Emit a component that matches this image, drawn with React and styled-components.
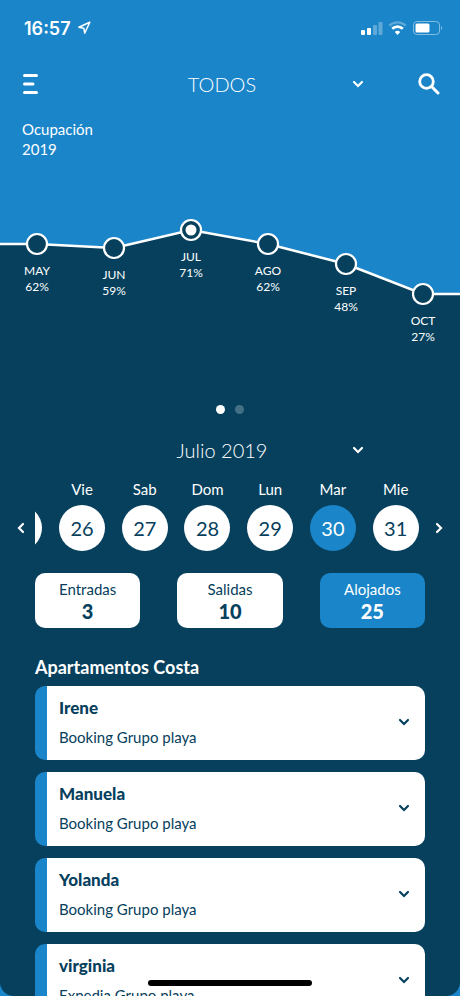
import React, { useState } from 'react'
import styled, { createGlobalStyle } from 'styled-components'

const BLUE = '#1a85c9'
const NAVY = '#06405d'
const WHITE = '#ffffff'

const occupancy = [
  { month: 'MAY', value: 62, x: 37, y: 76 },
  { month: 'JUN', value: 59, x: 114, y: 80 },
  { month: 'JUL', value: 71, x: 191, y: 62 },
  { month: 'AGO', value: 62, x: 268, y: 76 },
  { month: 'SEP', value: 48, x: 346, y: 96 },
  { month: 'OCT', value: 27, x: 423, y: 126 }
]

const days = [
  { name: 'Vie', number: 26 },
  { name: 'Sab', number: 27 },
  { name: 'Dom', number: 28 },
  { name: 'Lun', number: 29 },
  { name: 'Mar', number: 30 },
  { name: 'Mie', number: 31 }
]

const stats = [
  { label: 'Entradas', total: 3 },
  { label: 'Salidas', total: 10 },
  { label: 'Alojados', total: 25 }
]

const guests = [
  { name: 'Irene', source: 'Booking Grupo playa' },
  { name: 'Manuela', source: 'Booking Grupo playa' },
  { name: 'Yolanda', source: 'Booking Grupo playa' },
  { name: 'virginia', source: 'Expedia Grupo playa' }
]

const Chevron = props => (
  <svg width="12" height="12" viewBox="0 0 12 12" fill="none" aria-hidden="true" {...props}>
    <path
      d="M2 4l4 4 4-4"
      stroke="currentColor"
      strokeWidth="2.2"
      strokeLinecap="round"
      strokeLinejoin="miter"
    />
  </svg>
)

const Status = () => (
  <StatusBar>
    <Clock>
      16:57
      <svg width="14" height="14" viewBox="0 0 14 14" fill="none" aria-hidden="true">
        <path
          d="M12.8 1.2L1.8 6.3l5 .9.9 5z"
          stroke="currentColor"
          strokeWidth="1.5"
          strokeLinejoin="round"
        />
      </svg>
    </Clock>
    <svg width="84" height="16" viewBox="0 0 84 16" fill="none" aria-hidden="true">
      <g fill={WHITE}>
        <rect x="1" y="10" width="4" height="5" rx="1" />
        <rect x="7" y="8" width="4" height="7" rx="1" />
        <rect x="13" y="5" width="4" height="10" rx="1" opacity="0.3" />
        <rect x="18.5" y="2" width="4" height="13" rx="1" opacity="0.3" />
      </g>
      <path d="M29.3 5.6a12 12 0 0 1 16.4 0" stroke={WHITE} strokeWidth="2.4" opacity="0.3" />
      <path d="M32.2 8.8a7.6 7.6 0 0 1 10.6 0" stroke={WHITE} strokeWidth="2.6" />
      <path d="M34.8 12a4.2 4.2 0 0 1 5.4 0L37.5 15z" fill={WHITE} />
      <rect x="53.5" y="1.5" width="26" height="13" rx="3.5" stroke={WHITE} opacity="0.45" />
      <rect x="55.5" y="3.5" width="14" height="9" rx="1.5" fill={WHITE} />
      <path d="M81 6v4c1.6-.5 1.6-3.5 0-4z" fill={WHITE} opacity="0.45" />
    </svg>
  </StatusBar>
)

const Chart = () => {
  const first = occupancy[0]
  const last = occupancy[occupancy.length - 1]
  const line = [`0,${first.y}`, ...occupancy.map(p => `${p.x},${p.y}`), `460,${last.y}`].join(' ')

  return (
    <ChartSvg viewBox="0 0 460 192" role="img" aria-label="Ocupación 2019">
      <polygon points={`0,192 ${line} 460,192`} fill={NAVY} />
      <polyline points={line} fill="none" stroke={WHITE} strokeWidth="2.5" />
      {occupancy.map(p => (
        <g key={p.month}>
          <circle cx={p.x} cy={p.y} r="10" fill={NAVY} stroke={WHITE} strokeWidth="2.2" />
          {p.month === 'JUL' && <circle cx={p.x} cy={p.y} r="5.5" fill={WHITE} />}
          <ChartText x={p.x} y={p.y + 31}>{p.month}</ChartText>
          <ChartText x={p.x} y={p.y + 47}>{p.value}%</ChartText>
        </g>
      ))}
    </ChartSvg>
  )
}

const Dropdown = ({ label, options }) => (
  <SelectWrap>
    <Select aria-label={label}>
      {options.map(o => (
        <option key={o}>{o}</option>
      ))}
    </Select>
    <Chevron />
  </SelectWrap>
)

const App = () => {
  const [day, setDay] = useState(30)
  const [stat, setStat] = useState('Alojados')

  return (
    <Page>
      <GlobalStyle />
      <Screen>
        <Hero>
          <Status />
          <Header>
            <IconButton aria-label="Menú">
              <svg width="20" height="22" viewBox="0 0 20 22" aria-hidden="true">
                <path
                  d="M2.5 2.5h12M2.5 11h8.5M2.5 19.5h12"
                  stroke="currentColor"
                  strokeWidth="3"
                  strokeLinecap="round"
                />
              </svg>
            </IconButton>
            <Dropdown label="Alojamiento" options={['TODOS', 'Apartamentos Costa']} />
            <IconButton aria-label="Buscar">
              <svg width="22" height="22" viewBox="0 0 22 22" fill="none" aria-hidden="true">
                <circle cx="8.5" cy="8.5" r="6.8" stroke="currentColor" strokeWidth="2.8" />
                <path
                  d="M14 14l6 6"
                  stroke="currentColor"
                  strokeWidth="3"
                  strokeLinecap="round"
                />
              </svg>
            </IconButton>
          </Header>
          <Caption>
            Ocupación
            <br />
            2019
          </Caption>
          <Chart />
        </Hero>

        <Body>
          <Dots>
            <Dot $active />
            <Dot />
          </Dots>
          <MonthRow>
            <Dropdown label="Mes" options={['Julio 2019', 'Agosto 2019']} />
          </MonthRow>
          <Week>
            <Arrow aria-label="Anterior">
              <Chevron transform="rotate(90)" />
            </Arrow>
            <Days>
              {/* edge of the previous day, peeking in from the left */}
              <Day>
                <DayButton aria-label="Jue 25" onClick={() => setDay(25)} $active={day === 25} />
              </Day>
              {days.map(d => (
                <Day key={d.number}>
                  {d.name}
                  <DayButton $active={d.number === day} onClick={() => setDay(d.number)}>
                    {d.number}
                  </DayButton>
                </Day>
              ))}
            </Days>
            <Arrow aria-label="Siguiente">
              <Chevron transform="rotate(-90)" />
            </Arrow>
          </Week>
          <Stats>
            {stats.map(s => (
              <Stat key={s.label} $active={s.label === stat} onClick={() => setStat(s.label)}>
                {s.label}
                <strong>{s.total}</strong>
              </Stat>
            ))}
          </Stats>
          <Guests>
            <Title>Apartamentos Costa</Title>
            {guests.map(g => (
              <Card key={g.name}>
                <span>
                  <Name>{g.name}</Name>
                  <Source>{g.source}</Source>
                </span>
                <Chevron />
              </Card>
            ))}
          </Guests>
        </Body>
      </Screen>
      <HomeBar />
    </Page>
  )
}

export default App

const GlobalStyle = createGlobalStyle`
  * {
    box-sizing: border-box;
  }
  body {
    margin: 0;
    background: ${BLUE};
  }
  body, button, select {
    font-family: Lato, 'Liberation Sans', sans-serif;
  }
  button {
    padding: 0;
    border: 0;
    cursor: pointer;
  }
  svg {
    display: block;
    flex-shrink: 0;
  }
`

const Page = styled.div`
  height: 100vh;
  overflow: hidden;
  color: ${WHITE};
  background: ${BLUE};
`
const Screen = styled.main`
  height: 100%;
  overflow: hidden;
  background: ${NAVY};
  border-radius: 0 0 14px 14px;
`
const Hero = styled.section`
  background: ${BLUE};
`
const StatusBar = styled.div`
  display: flex;
  align-items: center;
  justify-content: space-between;
  height: 56px;
  padding: 0 16px 0 24px;
`
const Clock = styled.div`
  display: flex;
  align-items: center;
  gap: 6px;
  font-family: Inter, sans-serif;
  font-size: 18px;
  font-weight: 600;
`
const Header = styled.header`
  display: flex;
  align-items: center;
  justify-content: space-between;
  height: 56px;
  padding: 0 20px 0 22px;
`
const IconButton = styled.button`
  color: ${WHITE};
  background: none;
`
const SelectWrap = styled.div`
  display: flex;
  align-items: center;
  gap: 4px;
  width: 268px;
`
const Select = styled.select`
  flex: 1;
  height: 32px;
  padding: 0;
  border: 0;
  appearance: none;
  color: ${WHITE};
  background: none;
  font-size: 20px;
  font-weight: 300;
  text-align: center;
  text-align-last: center;
  option {
    color: ${NAVY};
  }
`
const Caption = styled.div`
  height: 56px;
  padding: 7px 22px;
  font-size: 15px;
  line-height: 20px;
`
const ChartSvg = styled.svg`
  width: 100%;
`
const ChartText = styled.text`
  fill: ${WHITE};
  font-size: 12px;
  text-anchor: middle;
`
const Body = styled.section`
  padding-top: 45px;
`
const Dots = styled.div`
  display: flex;
  justify-content: center;
  gap: 10px;
`
const Dot = styled.span`
  width: 9px;
  height: 9px;
  border-radius: 50%;
  background: ${WHITE};
  opacity: ${props => (props.$active ? 1 : 0.25)};
`
const MonthRow = styled.div`
  display: flex;
  justify-content: center;
  padding-top: 20px;
`
const Week = styled.div`
  display: flex;
  align-items: flex-end;
  padding: 13px 12px 0;
`
const Arrow = styled.button`
  display: flex;
  flex: none;
  align-items: center;
  justify-content: center;
  width: 18px;
  height: 46px;
  color: ${WHITE};
  background: none;
`
const Days = styled.div`
  display: flex;
  flex: 1;
  align-items: flex-end;
  justify-content: flex-end;
  margin: 0 3px 0 5px;
  overflow: hidden;
`
const Day = styled.div`
  display: flex;
  flex: 0 0 16%;
  flex-direction: column;
  align-items: center;
  gap: 6px;
  font-size: 15px;
  line-height: 20px;
`
const DayButton = styled.button`
  width: 46px;
  height: 46px;
  border-radius: 50%;
  color: ${props => (props.$active ? WHITE : NAVY)};
  background: ${props => (props.$active ? BLUE : WHITE)};
  font-size: 20px;
`
const Stats = styled.div`
  display: flex;
  justify-content: space-between;
  padding: 22px 35px 0;
`
const Stat = styled.button`
  display: flex;
  flex: 0 0 27%;
  flex-direction: column;
  align-items: center;
  justify-content: center;
  height: 55px;
  border-radius: 10px;
  color: ${props => (props.$active ? WHITE : NAVY)};
  background: ${props => (props.$active ? BLUE : WHITE)};
  font-size: 15px;
  line-height: 20px;
  strong {
    font-size: 20px;
    font-weight: 900;
    line-height: 24px;
  }
`
const Guests = styled.div`
  display: flex;
  flex-direction: column;
  gap: 12px;
  padding: 28px 35px 0;
`
const Title = styled.h2`
  margin: 0 0 -4px;
  font-size: 18px;
  font-weight: 700;
  line-height: 22px;
`
const Card = styled.button`
  display: flex;
  flex: none;
  align-items: center;
  justify-content: space-between;
  height: 74px;
  padding: 0 15px 2px 24px;
  border-radius: 10px;
  color: ${NAVY};
  background: linear-gradient(to right, ${BLUE} 12px, ${WHITE} 12px);
  text-align: left;
`
const Name = styled.strong`
  display: block;
  font-size: 17px;
  font-weight: 900;
  line-height: 22px;
`
const Source = styled.span`
  display: block;
  padding-top: 8px;
  font-size: 15px;
  line-height: 20px;
`
const HomeBar = styled.div`
  position: fixed;
  bottom: 10px;
  left: 50%;
  width: 164px;
  height: 6px;
  border-radius: 3px;
  background: #000000;
  transform: translateX(-50%);
`
